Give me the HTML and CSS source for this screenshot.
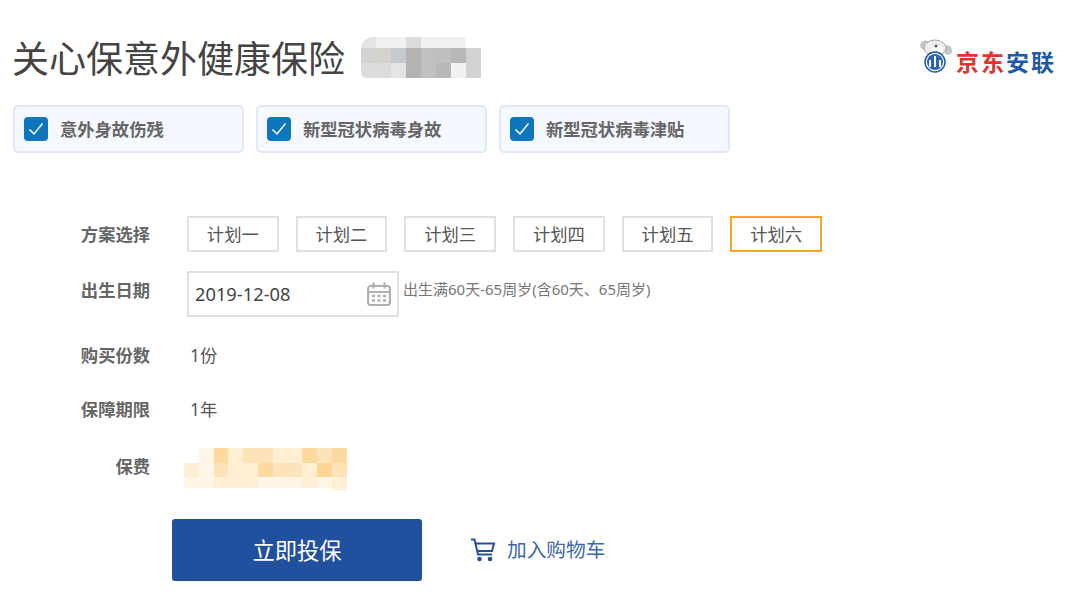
FILE: index.html
```html
<!DOCTYPE html>
<html lang="zh-CN">
<head>
    <meta charset="UTF-8">
    <title>关心保意外健康保险</title>
    <link rel="stylesheet" href="styles.css">
</head>
<body>
<div class="page">
    <div class="header">
        <div class="title-group">
            <h1>关心保意外健康保险</h1>
            <!-- Pixelated product note -->
            <div class="mosaic mosaic-grey">
                <span class="g1"></span><span class="g0"></span><span class="g0"></span><span class="g2"></span><span class="g0"></span><span class="g0"></span><span class="g0"></span><span class="blank"></span>
                <span class="g3"></span><span class="g4"></span><span class="g5"></span><span class="g6"></span><span class="g7"></span><span class="g8"></span><span class="g9"></span><span class="g3"></span>
                <span class="g2"></span><span class="g2"></span><span class="g1"></span><span class="g6"></span><span class="g7"></span><span class="g9"></span><span class="g0"></span><span class="g3"></span>
            </div>
        </div>
        <div class="logo">
            <svg class="logo-mark" width="34" height="36" viewBox="0 0 34 36">
                <path d="M1 7 C3 1 9 2 11 5 L7 12 C4 12 1 10 1 7Z" fill="#c4c6c9"/>
                <path d="M33 13 C33 8 28 6 25 8 L26 16 C30 18 33 16 33 13Z" fill="#c4c6c9"/>
                <ellipse cx="16" cy="10" rx="11" ry="8" fill="#eceded" stroke="#a5a8ad"/>
                <ellipse cx="18" cy="12" rx="6.500" ry="4" fill="#fff"/>
                <circle cx="17" cy="8" r="1.500" fill="#555"/>
                <circle cx="16" cy="24" r="10" fill="#fff" stroke="#1d5aa6" stroke-width="1.500"/>
                <circle cx="16" cy="24" r="8" fill="#2a68b4"/>
                <path d="M11 22v7M16 18v11M21 22v7" stroke="#fff" stroke-width="2"/>
            </svg>
            <span class="logo-text"><span class="logo-red">京东</span><span class="logo-blue">安联</span></span>
        </div>
    </div>

    <div class="chips">
        <div class="chip">
            <span class="check"><svg width="16" height="14" viewBox="0 0 16 14"><path d="M1.500 7.500 L6 12 L14.500 1.500" fill="none" stroke="#fff" stroke-width="1.500"/></svg></span>
            <span class="chip-text">意外身故伤残</span>
        </div>
        <div class="chip">
            <span class="check"><svg width="16" height="14" viewBox="0 0 16 14"><path d="M1.500 7.500 L6 12 L14.500 1.500" fill="none" stroke="#fff" stroke-width="1.500"/></svg></span>
            <span class="chip-text">新型冠状病毒身故</span>
        </div>
        <div class="chip">
            <span class="check"><svg width="16" height="14" viewBox="0 0 16 14"><path d="M1.500 7.500 L6 12 L14.500 1.500" fill="none" stroke="#fff" stroke-width="1.500"/></svg></span>
            <span class="chip-text">新型冠状病毒津贴</span>
        </div>
    </div>

    <div class="form">
        <div class="row row-plan">
            <div class="label">方案选择</div>
            <div class="plans">
                <button class="plan">计划一</button>
                <button class="plan">计划二</button>
                <button class="plan">计划三</button>
                <button class="plan">计划四</button>
                <button class="plan">计划五</button>
                <button class="plan active">计划六</button>
            </div>
        </div>
        <div class="row row-date">
            <div class="label">出生日期</div>
            <div class="date-box">
                <span class="date-text">2019-12-08</span>
                <svg width="24" height="24" viewBox="0 0 24 24" fill="none" stroke="#b0b0b0" stroke-width="2.200">
                    <rect x="1.100" y="4" width="21.800" height="19" rx="2.500"/>
                    <path d="M1 10h22M6.500 0.500v6M17.500 0.500v6"/>
                    <path d="M5 14h3M10.500 14h3M16 14h3M5 18.500h3M10.500 18.500h3M16 18.500h3" stroke-width="2.400"/>
                </svg>
            </div>
            <div class="hint">出生满60天-65周岁(含60天、65周岁)</div>
        </div>
        <div class="row row-text row-count">
            <div class="label">购买份数</div>
            <div class="value">1份</div>
        </div>
        <div class="row row-text row-term">
            <div class="label">保障期限</div>
            <div class="value">1年</div>
        </div>
        <div class="row row-fee">
            <div class="label">保费</div>
            <div class="mosaic mosaic-fee">
                <span class="blank"></span><span class="y1"></span><span class="y4"></span><span class="y2"></span><span class="y3"></span><span class="y3"></span><span class="y2"></span><span class="y2"></span><span class="y4"></span><span class="y3"></span><span class="y4"></span>
                <span class="y2"></span><span class="y1"></span><span class="y3"></span><span class="y2"></span><span class="y2"></span><span class="y4"></span><span class="y3"></span><span class="y3"></span><span class="y2"></span><span class="y5"></span><span class="y3"></span>
                <span class="y1"></span><span class="y1"></span><span class="y2"></span><span class="y2"></span><span class="y2"></span><span class="y1"></span><span class="y1"></span><span class="y1"></span><span class="y2"></span><span class="y1"></span><span class="y2"></span>
            </div>
        </div>
    </div>

    <div class="actions">
        <button class="buy">立即投保</button>
        <a class="cart" href="#">
            <svg width="26" height="24" viewBox="0 0 26 24" fill="none" stroke="#22509f" stroke-width="2">
                <path d="M1 1.500h3.500l3.500 15h14"/>
                <path d="M5.500 5.500h18.500l-2 7.500h-14.500"/>
                <circle cx="9.500" cy="21" r="1.300" fill="#22509f"/>
                <circle cx="20" cy="21" r="1.300" fill="#22509f"/>
            </svg>
            <span class="cart-text">加入购物车</span>
        </a>
    </div>
</div>
</body>
</html>
```

FILE: styles.css
```css
body {
    margin: 0;
    background-color: #ffffff;
    font-family: "Noto Sans", "Noto Sans CJK SC", sans-serif;
    color: #555555;
}

.page {
    width: 1080px;
    height: 605px;
    overflow: hidden;
}

.header {
    display: flex;
    justify-content: space-between;
    align-items: center;
    height: 41px;
    padding: 37px 24px 0 12px;
}

.title-group {
    display: flex;
    align-items: center;
    gap: 16px;
}

h1 {
    margin: 0;
    padding-top: 3px;
    font-size: 37px;
    font-weight: 400;
    line-height: 38px;
    color: #444444;
}

.mosaic {
    display: grid;
}

.mosaic-grey {
    grid-template-columns: repeat(8, 15px);
    grid-template-rows: 11px 15px 15px;
    border-top-left-radius: 12px;
    border-bottom-left-radius: 6px;
    overflow: hidden;
}

.blank { background-color: #ffffff; }
.g0 { background-color: #f1f1f0; }
.g1 { background-color: #e4e4e3; }
.g2 { background-color: #dcdcda; }
.g3 { background-color: #d2d2d3; }
.g4 { background-color: #d6d3cf; }
.g5 { background-color: #c6c9ce; }
.g6 { background-color: #b4b3b1; }
.g7 { background-color: #bfc1c0; }
.g8 { background-color: #c0bec0; }
.g9 { background-color: #b9b8b7; }

.logo {
    display: flex;
    align-items: center;
    gap: 3px;
}

.logo-mark {
    margin-bottom: 3px;
}

.logo-text {
    margin-top: 8px;
    font-size: 23px;
    font-weight: 700;
    line-height: 26px;
    letter-spacing: 2px;
}

.logo-red { color: #e0332e; }
.logo-blue { color: #1d5aa6; }

.chips {
    display: flex;
    gap: 12px;
    margin: 27px 0 0 13px;
}

.chip {
    display: flex;
    align-items: center;
    gap: 12px;
    box-sizing: border-box;
    width: 231px;
    height: 48px;
    padding-left: 9px;
    background-color: #f5f8fe;
    border: 2px solid #dfe9fb;
    border-radius: 5px;
    font-size: 17.3px;
    font-weight: 700;
    color: #666666;
}

.chip-text {
    padding-bottom: 2px;
}

.check {
    display: flex;
    justify-content: center;
    align-items: center;
    width: 24px;
    height: 24px;
    background-color: #0e76bc;
    border-radius: 4px;
}

.form {
    margin-top: 63px;
}

.row {
    display: flex;
    align-items: center;
}

.label {
    width: 150px;
    margin-right: 37px;
    padding-bottom: 2px;
    text-align: right;
    font-size: 17.3px;
    font-weight: 700;
    color: #666666;
    flex-shrink: 0;
}

.plans {
    display: flex;
    gap: 17.1px;
}

.plan {
    box-sizing: border-box;
    width: 91.6px;
    height: 36px;
    padding: 0 0 2px;
    background-color: #ffffff;
    border: 2px solid #e0e0e0;
    font-family: inherit;
    font-size: 17.3px;
    color: #555555;
}

.plan.active {
    border-color: #f5a623;
}

.row-date {
    margin-top: 19px;
}

.row-date .label {
    margin-bottom: 8px;
}

.date-box {
    display: flex;
    justify-content: space-between;
    align-items: center;
    box-sizing: border-box;
    width: 212px;
    height: 46px;
    padding: 0 6px;
    border: 2px solid #e0e0e0;
    font-size: 18.3px;
    color: #444444;
}

.date-text {
    padding-bottom: 2px;
}

.hint {
    margin: 0 0 12px 4px;
    font-size: 15px;
    color: #777777;
}

.row-text {
    height: 36px;
}

.row-text .label,
.row-text .value {
    padding-bottom: 4px;
}

.row-count {
    margin-top: 21px;
}

.row-term {
    margin-top: 18px;
}

.value {
    padding-left: 3px;
    font-size: 17.3px;
    color: #555555;
}

.row-fee {
    margin-top: 20px;
    height: 43px;
}

.row-fee .label {
    padding-bottom: 8px;
}

.mosaic-fee {
    grid-template-columns: repeat(11, 14.8px);
    grid-template-rows: 15px 14px 11px 3px;
    margin-left: -3px;
}

/* the tail under the last cell */
.mosaic-fee::after {
    content: "";
    grid-column: 11;
    background-color: #fff2dd;
}

.y1 { background-color: #fff6e8; }
.y2 { background-color: #fdeed4; }
.y3 { background-color: #fce3b8; }
.y4 { background-color: #fcd99d; }
.y5 { background-color: #fdd593; }

.actions {
    display: flex;
    align-items: center;
    gap: 48px;
    margin: 28px 0 0 172px;
}

.buy {
    width: 250px;
    height: 62px;
    padding: 0 0 2px;
    background-color: #21509f;
    border: none;
    border-radius: 3px;
    font-family: inherit;
    font-size: 22.3px;
    color: #ffffff;
}

.cart {
    display: flex;
    align-items: center;
    gap: 11px;
    font-size: 19.7px;
    color: #3d67ab;
    text-decoration: none;
}

.cart-text {
    padding-bottom: 4px;
}
```
